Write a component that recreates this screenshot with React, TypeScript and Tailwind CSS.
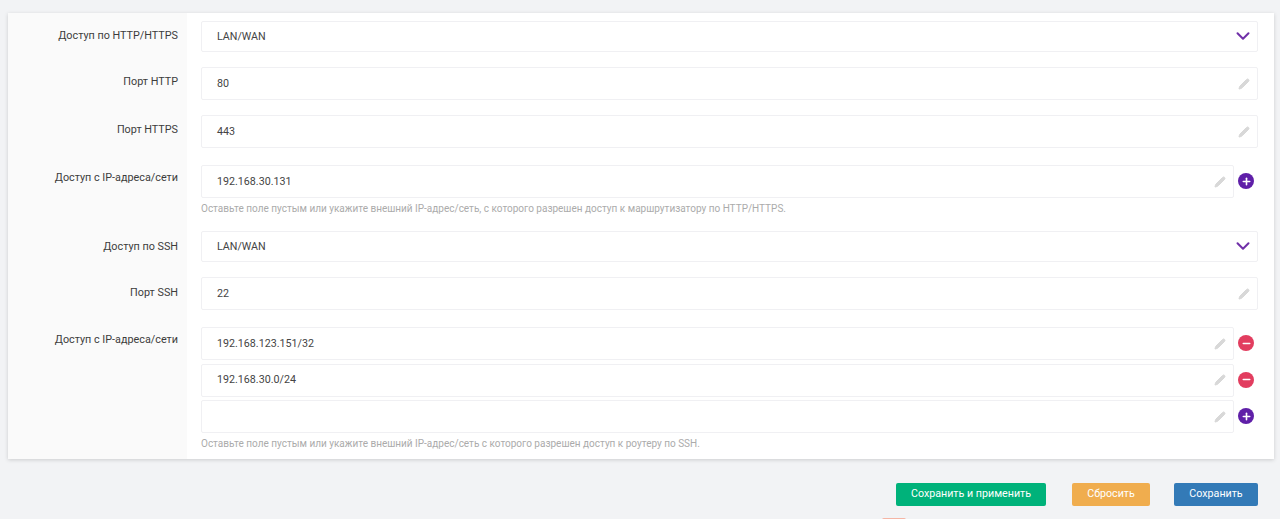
import type { ReactNode } from "react";
import { ChevronDown, Pencil, Plus, Minus } from "lucide-react";

const font = { fontFamily: "Roboto, sans-serif" };

function SelectBox({ value }: { value: string }) {
  return (
    <div className="flex h-[31px] items-center justify-between rounded-[2px] border border-[#f0f0f3] bg-white pl-[15px] pr-[3px] text-[10.7px] text-[#444]">
      <span className="pt-[1px]">{value}</span>
      <ChevronDown className="mb-[1px] h-[22px] w-[22px] text-[#7030a8]" strokeWidth={2.2} />
    </div>
  );
}

function InputBox({ value = "", action }: { value?: string; action?: "add" | "remove" }) {
  return (
    <div className="flex items-center">
      <div className="flex h-[33px] flex-1 items-center justify-between rounded-[2px] border border-[#f0f0f3] bg-white pl-[15px] pr-[7px] text-[10.7px] text-[#444]">
        <span className="pt-[1px]">{value}</span>
        <Pencil className="h-[12px] w-[12px] fill-[#d8d8d8] text-[#d8d8d8]" />
      </div>
      {action && (
        <div
          className={`mx-[4px] mb-[1px] flex h-[16px] w-[16px] items-center justify-center rounded-full text-white ${
            action === "add" ? "bg-[#5f1fa8]" : "bg-[#e23d5f]"
          }`}
        >
          {action === "add" ? (
            <Plus className="h-[11px] w-[11px]" strokeWidth={3.5} />
          ) : (
            <Minus className="h-[11px] w-[11px]" strokeWidth={3.5} />
          )}
        </div>
      )}
    </div>
  );
}

function Hint({ text }: { text: string }) {
  return <p className="mt-[4px] text-[10px] leading-[14px] text-[#ababab]">{text}</p>;
}

function Row({
  label,
  labelPt,
  children,
  className = "",
}: {
  label: string;
  labelPt: string;
  children: ReactNode;
  className?: string;
}) {
  return (
    <div className={`flex ${className}`}>
      <div className={`w-[170px] shrink-0 text-right text-[10.8px] leading-[16px] text-[#3c3c3c] ${labelPt}`}>
        {label}
      </div>
      <div className="ml-[9px] flex-1 pl-[14px] pr-[16px]">{children}</div>
    </div>
  );
}

export default function App() {
  return (
    <div className="h-[519px] overflow-hidden bg-[#f2f3f5] px-[8px] pt-[13px]" style={font}>
      <div className="relative w-[1266px] bg-white shadow-[0_1px_4px_rgba(0,0,0,0.16)]">
        <div className="absolute inset-y-0 left-0 w-[179px] bg-[#fafafa]" />
        <div className="relative pt-[8px] pb-[8px]">
          <Row label="Доступ по HTTP/HTTPS" labelPt="pt-[7px]">
            <SelectBox value="LAN/WAN" />
          </Row>
          <Row label="Порт HTTP" labelPt="pt-[7px]" className="mt-[15px]">
            <InputBox value="80" />
          </Row>
          <Row label="Порт HTTPS" labelPt="pt-[7px]" className="mt-[15px]">
            <InputBox value="443" />
          </Row>
          <Row label="Доступ с IP-адреса/сети" labelPt="pt-[5px]" className="mt-[17px]">
            <InputBox value="192.168.30.131" action="add" />
            <Hint text="Оставьте поле пустым или укажите внешний IP-адрес/сеть, с которого разрешен доступ к маршрутизатору по HTTP/HTTPS." />
          </Row>
          <Row label="Доступ по SSH" labelPt="pt-[8px]" className="mt-[15px]">
            <SelectBox value="LAN/WAN" />
          </Row>
          <Row label="Порт SSH" labelPt="pt-[8px]" className="mt-[15px]">
            <InputBox value="22" />
          </Row>
          <Row label="Доступ с IP-адреса/сети" labelPt="pt-[5px]" className="mt-[17px]">
            <div className="flex flex-col gap-[3.5px]">
              <InputBox value="192.168.123.151/32" action="remove" />
              <InputBox value="192.168.30.0/24" action="remove" />
              <InputBox action="add" />
            </div>
            <Hint text="Оставьте поле пустым или укажите внешний IP-адрес/сеть с которого разрешен доступ к роутеру по SSH." />
          </Row>
        </div>
      </div>
      <div className="mt-[24px] flex justify-end pr-[14px] text-[10.7px] text-white">
        <button className="h-[23px] w-[150px] rounded-[2px] bg-[#00b27a]">Сохранить и применить</button>
        <button className="ml-[26px] h-[23px] w-[78px] rounded-[2px] bg-[#f0ad4e]">Сбросить</button>
        <button className="ml-[24px] h-[23px] w-[84px] rounded-[2px] bg-[#337ab7]">Сохранить</button>
      </div>
      <div className="ml-[874px] mt-[12px] h-[4px] w-[24px] rounded-t-[2px] bg-[#f5b5a5]" />
    </div>
  );
}
